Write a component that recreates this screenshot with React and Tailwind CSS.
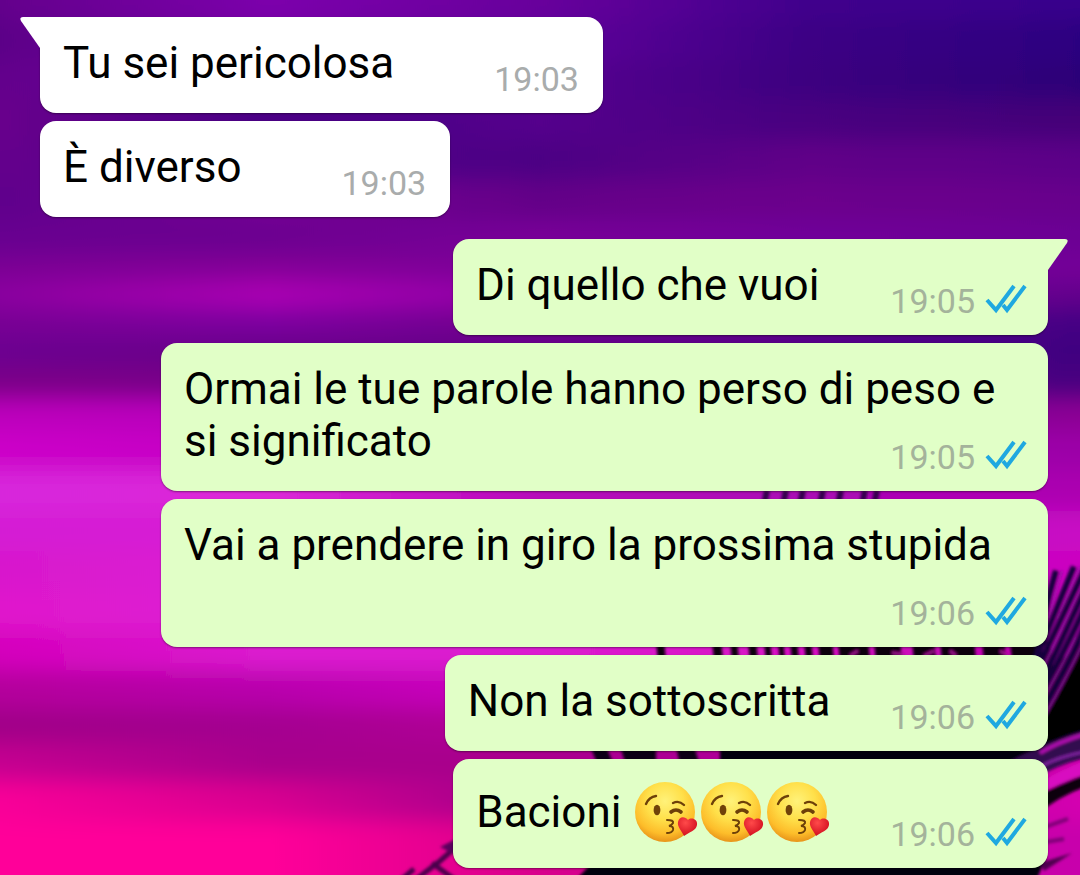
import React from "react";

// wallpaper colours, sampled left to right for each height
const SKY = [
	{ y: 0, stops: ["#64008c", "#7c00ac", "#68009c", "#40008c", "#38008c"] },
	{ y: 40, stops: ["#5c0088", "#7400a0", "#60009a", "#3c0084", "#2c0080"] },
	{ y: 80, stops: ["#64008c", "#68009c", "#580090", "#3c0080", "#2c0078"] },
	{ y: 120, stops: ["#68008c", "#480084", "#54008c", "#480080", "#440078"] },
	{ y: 160, stops: ["#64008c", "#54008a", "#4c0084", "#600088", "#5c0088"] },
	{ y: 200, stops: ["#60008c", "#740094", "#640088", "#6c008c", "#68008c"] },
	{ y: 240, stops: ["#680090", "#6c0090", "#780098", "#70009a", "#6c0094"] },
	{ y: 268, stops: ["#7c0094", "#840098", "#7c0098", "#70009a", "#740098"] },
	{ y: 294, stops: ["#8c00a0", "#ac00b4", "#8c00a4", "#70009a", "#64008c"] },
	{ y: 322, stops: ["#780094", "#7c00a0", "#70008c", "#60008c", "#440084"] },
	{ y: 350, stops: ["#6c0090", "#680088", "#640088", "#500084", "#400080"] },
	{ y: 385, stops: ["#7c0088", "#780088", "#700088", "#600088", "#480080"] },
	{ y: 412, stops: ["#bc00bc", "#b800bc", "#a000ac", "#8000a0", "#8c0094"] },
	{ y: 450, stops: ["#cc00c8", "#c400c4", "#b800bc", "#a000b0", "#9c00a8"] },
	{ y: 490, stops: ["#d828dc", "#dc28d8", "#b408b8", "#a808b4", "#ac00b0"] },
	{ y: 530, stops: ["#d41cd4", "#d81cd4", "#c810c4", "#c008c0", "#c808c4"] },
	{ y: 570, stops: ["#d818cc", "#dc20d4", "#d41ccc", "#c810c4", "#cc04c0"] },
	{ y: 610, stops: ["#e018cc", "#dc20d4", "#d81ccc", "#cc10c0", "#c400b8"] },
	{ y: 650, stops: ["#d400bc", "#dc1cd0", "#dc1cd0", "#d810c4", "#b800ac"] },
	{ y: 690, stops: ["#b4009c", "#b800ac", "#cc00c0", "#c000b0", "#c000ac"] },
	{ y: 725, stops: ["#a00088", "#a40090", "#b40098", "#b800a0", "#c400ac"] },
	{ y: 760, stops: ["#c40090", "#a8008c", "#a8008c", "#b0009c", "#cc00ac"] },
	{ y: 800, stops: ["#f80098", "#d80090", "#a0008c", "#b8009c", "#d400b0"] },
	{ y: 840, stops: ["#ff0099", "#ff0099", "#d8008c", "#c8009c", "#c800ac"] },
];

// palm fronds: base point, tip, bend
const FRONDS = [
	[1036, 664, 1056, 570, 1042],
	[1030, 672, 1074, 566, 1052],
	[1030, 684, 1086, 566, 1058],
	[1034, 696, 1088, 582, 1062],
	[1034, 706, 1088, 600, 1064],
	[1040, 714, 1088, 618, 1068],
];

const TIPS = [764, 783, 800, 820, 838, 862, 874];
const GAPS = [
	[656, 8], [712, 9], [730, 7], [748, 8], [764, 6], [778, 5], [790, 7], [804, 7], [818, 14],
	[838, 30], [874, 26], [912, 22], [940, 34], [982, 22], [1010, 40],
];

const Wallpaper = () => (
	<svg
		className="absolute inset-0 h-full w-full"
		viewBox="0 0 1080 875"
		preserveAspectRatio="none"
		aria-hidden="true"
	>
		<defs>
			<filter id="sky" x="-10%" y="-10%" width="120%" height="120%">
				<feGaussianBlur stdDeviation="0 11" />
			</filter>
			<filter id="leaf">
				<feGaussianBlur stdDeviation="1.4" />
			</filter>
			{SKY.map((row, i) => (
				<linearGradient key={row.y} id={`row${i}`}>
					{row.stops.map((color, n) => (
						<stop key={n} offset={n / 4} stopColor={color} />
					))}
				</linearGradient>
			))}
		</defs>
		<rect width="1080" height="875" fill="#680090" />
		<g filter="url(#sky)">
			{SKY.map((row, i) => {
				const top = i === 0 ? -60 : (SKY[i - 1].y + row.y) / 2;
				const bottom = i === SKY.length - 1 ? 960 : (row.y + SKY[i + 1].y) / 2;
				return (
					<rect key={row.y} x="0" y={top} width="1080" height={bottom - top + 1} fill={`url(#row${i})`} />
				);
			})}
		</g>
		<g filter="url(#leaf)">
			<path d="M1030 668 L1056 664 L1090 634 V728 L1046 746 L1030 762Z" fill="#020006" />
			{GAPS.map(([x, w]) => (
				<path key={x} d={`M${x} 640 h${w} l3 30 h${-w}Z`} fill="#08000e" />
			))}
			<path d="M720 745 H1044 V765 H720Z" fill="#04000a" />
			<path d="M590 745 h16 l8 20 h-16Z M620 745 h36 v20 h-30Z M676 745 h18 l6 20 h-20Z" fill="#100018" />
			<path d="M590 864 H1010 L1046 856 L1034 885 H570 Z" fill="#04000a" />
			<path d="M1000 766 Q1050 738 1090 728 V756 Q1060 762 1030 780Z" fill="#300850" />
			<path d="M1040 752 Q1060 740 1090 732" fill="none" stroke="#b010b0" strokeWidth="4" />
			<path d="M1040 766 Q1060 755 1090 750" fill="none" stroke="#8020a0" strokeWidth="3" />
			<path d="M1036 784 Q1062 768 1090 758 V774 Q1060 782 1036 794Z" fill="#d810c0" />
			<path d="M1036 796 Q1060 782 1090 772 V784 Q1060 794 1036 814Z" fill="#08000c" />
			<path d="M1040 828 L1068 818 M1040 842 L1064 838" stroke="#800078" strokeWidth="4" />
			<path d="M1040 862 L1072 852 L1044 870Z" fill="#500050" />
			{FRONDS.map(([x, y, tx, ty, bend]) => (
				<g key={tx + ty} fill="none">
					<path d={`M${x} ${y} Q${bend} ${(y + ty) / 2} ${tx} ${ty}`} stroke="#18003c" strokeWidth="6" />
					<path d={`M${x + 5} ${y} Q${bend + 5} ${(y + ty) / 2} ${tx + 6} ${ty}`} stroke="#9010a0" strokeWidth="2" />
				</g>
			))}
			{TIPS.map((x) => (
				<path key={x} d={`M${x} 504 L${x + 3} 490`} stroke="#30004c" strokeWidth="6" />
			))}
			<path
				d="M850 655 l8 -5 M892 652 l12 2 M924 655 l10 -5 M950 650 l6 5 M1000 650 l8 5"
				stroke="#a01090"
				strokeWidth="3"
			/>
			<path
				d="M400 880 L414 868 M414 880 L440 860 L456 846 M432 862 L462 884"
				fill="none"
				stroke="#48004c"
				strokeWidth="5"
			/>
			<path d="M440 846 L456 838 V854Z" fill="#58005c" />
		</g>
	</svg>
);

const Ticks = () => (
	<svg className="mb-1 h-8 w-[42px]" viewBox="0 0 42 32" fill="none" aria-label="Letto" role="img">
		<g stroke="#1fa8e0" strokeWidth="4">
			<path d="M2 17 L11 27 L29 3" />
			<path d="M18 22 L22 27 L40 3" />
		</g>
	</svg>
);

const Kiss = () => (
	<svg
		className="inline-block h-16 w-[66px] align-[-16px]"
		viewBox="0 0 66 64"
		role="img"
		aria-label="Faccina che manda un bacio"
	>
		<defs>
			<radialGradient id="face" cx="50%" cy="32%" r="68%">
				<stop offset="0" stopColor="#fff27a" />
				<stop offset="0.45" stopColor="#ffe04a" />
				<stop offset="0.8" stopColor="#fdbd2a" />
				<stop offset="1" stopColor="#e8941a" />
			</radialGradient>
			<radialGradient id="heart" cx="40%" cy="30%" r="75%">
				<stop offset="0" stopColor="#ff4a4a" />
				<stop offset="1" stopColor="#cf0a1c" />
			</radialGradient>
		</defs>
		<circle cx="33" cy="33" r="30" fill="url(#face)" />
		<g fill="none" stroke="#6d4009" strokeWidth="2.4" strokeLinecap="round">
			<path d="M14 25 Q17 18 24 17" />
			<path d="M41 24 Q47 21 52 26" />
			<path d="M39 33 Q44 29 49 33" strokeWidth="3.6" />
			<path d="M35 41 Q42 41 41 44 Q40 46 37 47 Q42 47 41 51 Q40 54 35 54" strokeWidth="2" />
		</g>
		<ellipse cx="25" cy="31" rx="3.4" ry="5.2" fill="#704209" />
		<path
			d="M52 57 C50 52 45 48 46 43 C47 37 53 37 56 41 C59 38 66 40 65 46 C64 52 57 53 52 57Z"
			fill="url(#heart)"
		/>
	</svg>
);

const MESSAGES = [
	{ text: "Tu sei pericolosa", time: "19:03", tail: true },
	{ text: "È diverso", time: "19:03" },
	{ text: "Di quello che vuoi\u00a0", time: "19:05", sent: true, tail: true },
	{ text: "Ormai le tue parole hanno perso di peso e si significato", time: "19:05", sent: true },
	{ text: "Vai a prendere in giro la prossima stupida", time: "19:06", sent: true },
	{ text: "Non la sottoscritta", time: "19:06", sent: true },
	{ text: "Bacioni ", kisses: 3, time: "19:06", sent: true },
];

const Tail = ({ sent }) =>
	sent ? (
		<svg className="absolute -right-5 top-0 h-8 w-9" viewBox="0 0 36 32" aria-hidden="true">
			<path d="M0 0 H33 Q37 0 35 4 L16 31 H0Z" fill="#e1ffc7" />
		</svg>
	) : (
		<svg className="absolute -left-5 top-0 h-8 w-9" viewBox="0 0 36 32" aria-hidden="true">
			<path d="M36 0 H3 Q-1 0 1 4 L20 31 H36Z" fill="#ffffff" />
		</svg>
	);

const Message = ({ text, time, sent, tail, kisses }) => (
	<li
		className={`relative flow-root w-fit max-w-[88%] rounded-2xl pt-5 pb-[14px] pl-[23px] shadow-[0_1px_2px_rgba(0,0,0,0.4)] ${
			sent ? "self-end bg-[#e1ffc7] pr-[21px]" : "self-start bg-white pr-6"
		} ${tail && sent ? "mt-[14px]" : ""}`}
	>
		{tail && <Tail sent={sent} />}
		<span className="relative">
			{text}
			{kisses && Array.from({ length: kisses }, (_, i) => <Kiss key={i} />)}
		</span>
		<span
			className={`float-right flex items-center gap-[10px] text-[34px] leading-10 ${
				kisses ? "mt-[35px]" : "mt-[22px]"
			} ${sent ? "ml-[60px] text-[#a4b39b]" : "ml-[100px] text-[#a9acac]"}`}
		>
			<time>{time}</time>
			{sent && <Ticks />}
		</span>
	</li>
);

export default function App() {
	return (
		<main className="relative min-h-screen overflow-hidden bg-[#680090] font-['Roboto',sans-serif]">
			<Wallpaper />
			<ul className="relative flex flex-col gap-2 pt-[17px] pr-8 pb-2 pl-10 text-[44px] leading-[52px] text-black">
				{MESSAGES.map((message, i) => (
					<Message key={i} {...message} />
				))}
			</ul>
		</main>
	);
}
